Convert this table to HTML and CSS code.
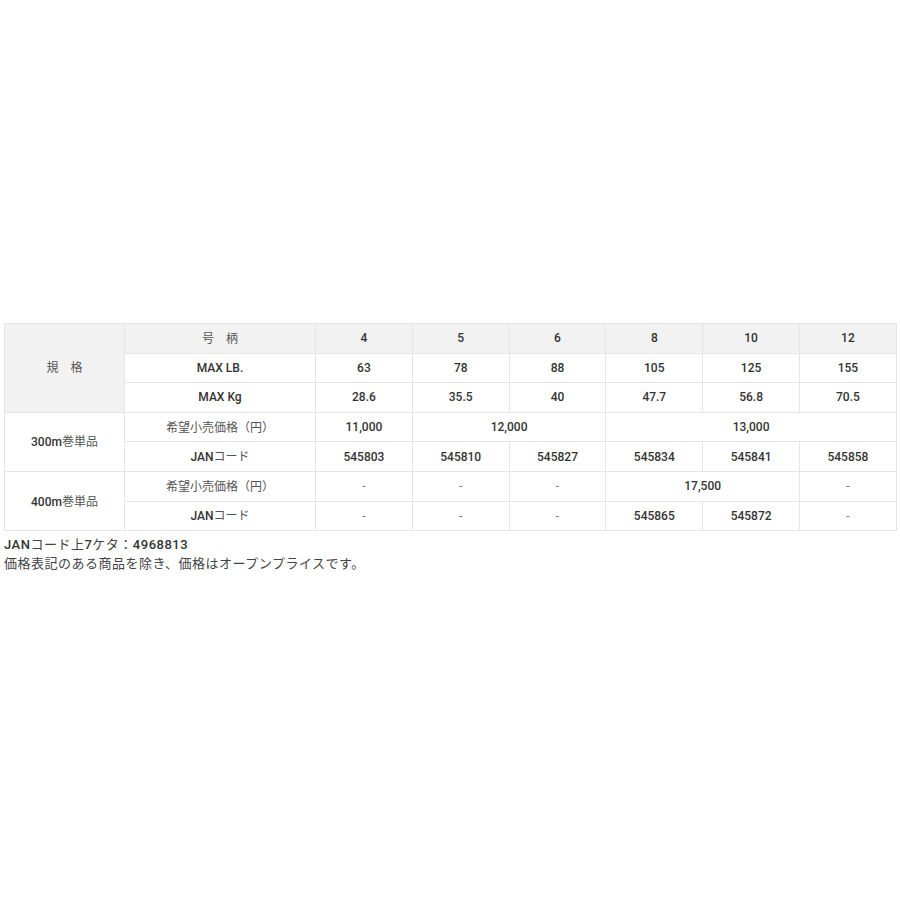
FILE: index.html
```html
<!DOCTYPE html>
<html lang="ja">
<head>
<meta charset="utf-8">
<link rel="stylesheet" href="styles.css">
</head>
<body>
<div class="page">
  <table class="spec">
    <colgroup>
      <col class="c1"><col class="c2"><col class="cn"><col class="cn"><col class="cn"><col class="cn"><col class="cn"><col class="cn">
    </colgroup>
    <tr class="head">
      <td rowspan="3" class="label gray"><span class="jp">規　格</span></td>
      <td class="jp">号　柄</td>
      <td>4</td><td>5</td><td>6</td><td>8</td><td>10</td><td>12</td>
    </tr>
    <tr>
      <td>MAX LB.</td>
      <td>63</td><td>78</td><td>88</td><td>105</td><td>125</td><td>155</td>
    </tr>
    <tr>
      <td>MAX Kg</td>
      <td>28.6</td><td>35.5</td><td>40</td><td>47.7</td><td>56.8</td><td>70.5</td>
    </tr>
    <tr>
      <td rowspan="2" class="label">300m<span class="jp">巻単品</span></td>
      <td class="jp">希望小売価格（円）</td>
      <td>11,000</td><td colspan="2">12,000</td><td colspan="3">13,000</td>
    </tr>
    <tr>
      <td>JAN<span class="jp">コード</span></td>
      <td>545803</td><td>545810</td><td>545827</td><td>545834</td><td>545841</td><td>545858</td>
    </tr>
    <tr>
      <td rowspan="2" class="label">400m<span class="jp">巻単品</span></td>
      <td class="jp">希望小売価格（円）</td>
      <td class="dash">-</td><td class="dash">-</td><td class="dash">-</td><td colspan="2">17,500</td><td class="dash">-</td>
    </tr>
    <tr>
      <td>JAN<span class="jp">コード</span></td>
      <td class="dash">-</td><td class="dash">-</td><td class="dash">-</td><td>545865</td><td>545872</td><td class="dash">-</td>
    </tr>
  </table>
  <div class="notes">
    <p>JAN<span class="jp">コード上</span>7<span class="jp">ケタ：</span>4968813</p>
    <p class="jp">価格表記のある商品を除き、価格はオープンプライスです。</p>
  </div>
</div>
</body>
</html>
```
FILE: styles.css
```css
html, body {
  margin: 0;
  padding: 0;
  background: #ffffff;
}
.page {
  padding: 323px 4px 0 4px;
  font-family: "Roboto", "Noto Sans CJK JP", sans-serif;
  font-weight: 500;
  font-size: 12px;
  color: #333333;
}
.jp {
  font-family: "Noto Sans CJK JP", sans-serif;
  font-weight: 400;
  color: #555555;
}
.spec {
  border-collapse: collapse;
  table-layout: fixed;
  width: 892px;
}
.c1 { width: 120px; }
.c2 { width: 191px; }
.cn { width: 96.8px; }
.spec td {
  border: 1px solid #e6e6e6;
  height: 28.6px;
  padding: 0;
  text-align: center;
  vertical-align: middle;
  line-height: 16px;
}
.spec .head td {
  background: #f2f2f2;
}
.spec td.gray {
  background: #f2f2f2;
}
.spec td.label {
  color: #333333;
}
.spec td.dash {
  color: #777777;
  font-weight: 400;
}
.notes {
  margin-top: 4px;
  font-size: 13px;
}
.notes p {
  margin: 0;
  line-height: 18px;
  letter-spacing: 0.5px;
}
.notes .jp {
  color: #444444;
}
```
